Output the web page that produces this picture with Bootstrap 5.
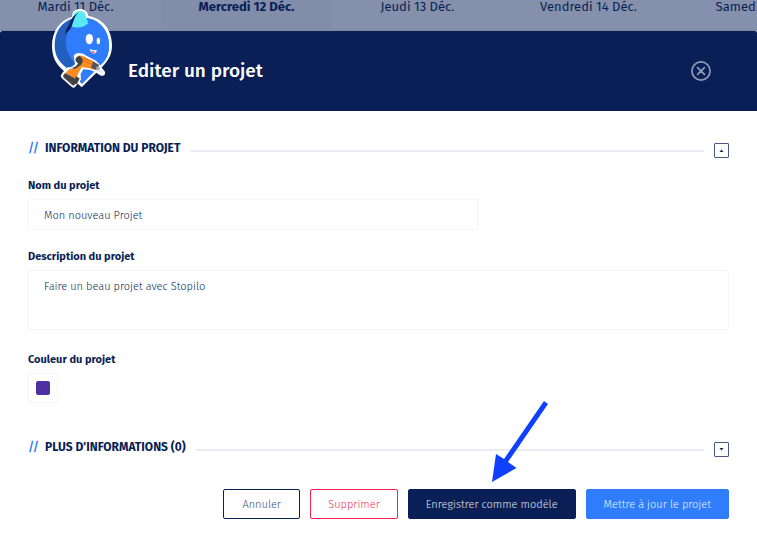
<!DOCTYPE html>
<html lang="fr">
<head>
<meta charset="utf-8">
<meta name="viewport" content="width=device-width, initial-scale=1">
<title>Editer un projet</title>
<link rel="stylesheet" href="https://cdn.jsdelivr.net/npm/bootstrap@5.3.0/dist/css/bootstrap.min.css">
<style>
:root { --navy: #0a1f56; --azure: #2f7dfc; --rose: #f5214f; }
body { font-family: "Fira Sans", "Noto Sans", "Open Sans", sans-serif; font-size: 11px; line-height: 16px; color: var(--navy); background: #fff; }
.days { height: 31px; background: #8591ac; margin: 0; overflow: hidden; font-size: 13px; border-bottom: 2px solid #808ba4; }
.days-track { margin-left: -10px; }
.day { flex: 0 0 171px; text-align: center; line-height: 13px; }
.day-active { background: #828daa; font-weight: 700; }
.dialog-head { background: var(--navy); height: 80px; padding: 0 46px 0 128px; border-radius: 2px 2px 0 0; }
.dialog-title { font-size: 19px; line-height: 24px; font-weight: 500; color: #fff; }
.mascot { left: 50px; bottom: 22px; width: 64px; height: 82px; }
.dismiss { width: 20px; height: 20px; line-height: 0; }
.dialog-body { padding: 29px 28px; }
.section-row { gap: 10px; }
.section-first { margin-bottom: 20px; }
.section-more { margin-bottom: 32px; }
.section-title { font-size: 12px; line-height: 16px; font-weight: 700; margin: 0 0 2px; }
.slashes { color: var(--azure); font-weight: 500; width: 17px; }
.rule { height: 2px; margin-bottom: 6px; background: #e8edf5; }
.toggle { width: 15px; height: 15px; border: 1px solid #47578a; border-radius: 1px; background: #fff; }
.group-name { margin-bottom: 19px; }
.group-text { margin-bottom: 22px; }
.group-color { margin-bottom: 36px; }
.field-name { font-weight: 700; margin-bottom: 5px; }
.field { border: 1px solid #f4f5f9; border-radius: 2px; padding: 8px 15px 6px; font-size: 11px; font-weight: 300; line-height: 16px; color: var(--navy); }
.field-short { max-width: 450px; height: 31px; }
.field-long { height: 60px; resize: none; }
.swatch { width: 30px; height: 30px; border: 1px solid #f4f5f9; border-radius: 2px; padding: 7px; background: #fff; }
.swatch::-webkit-color-swatch-wrapper { padding: 0; }
.swatch::-webkit-color-swatch { border: 0; border-radius: 2px; }
.actions { gap: 10px; }
.action { --bs-btn-font-size: 11px; --bs-btn-line-height: 16px; --bs-btn-padding-x: 17px; --bs-btn-border-radius: 2px; padding-top: 7px; padding-bottom: 5px; min-width: 77px; font-weight: 300; }
.action-cancel { color: #3d4d7a; border-color: var(--navy); }
.action-delete { color: #f5305a; border-color: var(--rose); }
.action-model { color: #e2e6ef; background: var(--navy); border-color: var(--navy); }
.action-save { color: #eaf2ff; background: var(--azure); border-color: var(--azure); }
.pointer { left: 50%; bottom: 100%; width: 57px; height: 81px; margin-bottom: 8px; pointer-events: none; }
</style>
</head>
<body>
<div class="days" aria-hidden="true">
  <div class="days-track d-flex h-100">
    <div class="day">Mardi 11 Déc.</div>
    <div class="day day-active">Mercredi 12 Déc.</div>
    <div class="day">Jeudi 13 Déc.</div>
    <div class="day">Vendredi 14 Déc.</div>
    <div class="day">Samedi 15 Déc.</div>
  </div>
</div>
<main>
  <header class="dialog-head position-relative d-flex align-items-center justify-content-between">
    <svg class="mascot position-absolute" viewBox="30 21 192 246" aria-hidden="true">
      <path d="M97 50C92 22 142 18 145 48C191 56 216 91 216 136C216 166 204 184 184 203L125 262L62 204C43 185 36 164 36 136C36 95 59 60 97 50Z" fill="#fff"/>
      <path d="M104 54C64 64 44 95 44 136C44 165 55 183 74 199L126 251L182 195C199 179 207 162 207 137C207 91 178 59 138 54Z" fill="#225fbf"/>
      <path d="M116 60C88 75 78 98 78 129C78 157 91 172 105 190L126 251L182 195C199 179 207 162 207 137C207 91 178 59 138 54Z" fill="#2f7dfc"/>
      <path d="M102 42C109 30 131 29 136 44L145 70C131 84 108 86 93 78Z" fill="#59e9f4"/>
      <path d="M117 38C99 48 101 74 89 89L76 102L79 88C92 72 90 48 117 38Z" fill="#08205b"/>
      <ellipse cx="148" cy="117" rx="11" ry="16" fill="#fff"/>
      <ellipse cx="175" cy="123" rx="5" ry="10" fill="#fff"/>
      <path d="M149 146Q159 152 171 150Q169 161 160 161Q152 158 149 146Z" fill="#fff"/>
      <path d="M153 154Q160 151 165 158Q159 164 153 154Z" fill="#f6536d"/>
      <path d="M101 169C105 155 126 158 134 164L159 178Q175 185 184 202L195 215Q197 229 183 227L165 216L151 210L130 208L122 222L123 239L105 261Q100 266 92 258L65 234Q60 227 66 220L82 202Q96 203 105 192Z" fill="#fff"/>
      <path d="M108 174Q115 164 128 168L160 184L174 195L166 210L145 204L125 201L114 221L108 239L77 219L88 207L105 207L116 190Z" fill="#ff8b23"/>
      <path d="M107 174L119 167L128 177Q130 192 117 199L105 207L92 204Q110 202 114 190L107 184Z" fill="#434348"/>
      <path d="M76 219L111 239L103 256Q98 258 94 253L70 232Q67 227 76 219Z" fill="#434348"/>
      <path d="M107 229L119 235L111 252L103 253Z" fill="#434348"/>
      <path d="M159 184L178 195L169 210L153 204Z" fill="#58565a"/>
      <path d="M171 199L181 204L177 214L167 209Z" fill="#a3a6b0"/>
      <path d="M178 206L190 218L187 222L173 212Z" fill="#e5e7ed"/>
      <path d="M133 174L154 184M129 181L151 192" stroke="#d97212" stroke-width="3"/>
    </svg>
    <h1 class="dialog-title m-0">Editer un projet</h1>
    <button type="button" class="dismiss btn p-0 border-0" aria-label="Fermer">
      <svg width="20" height="20" viewBox="0 0 20 20" fill="none" stroke="#8f9ab8" stroke-width="1.7" stroke-linecap="round"><circle cx="10" cy="10" r="9.1"/><path d="M6.6 6.6L13.4 13.4M13.4 6.6L6.6 13.4"/></svg>
    </button>
  </header>
  <form class="dialog-body">
    <div class="section-row section-first d-flex align-items-end">
      <h2 class="section-title d-flex"><span class="slashes" aria-hidden="true">//</span>INFORMATION DU PROJET</h2>
      <div class="rule flex-grow-1"></div>
      <button type="button" class="toggle p-0 d-flex align-items-center justify-content-center" aria-label="Réduire"><svg width="5" height="3" viewBox="0 0 5 3"><path d="M0.500 3L2.500 0.500L4.500 3Z" fill="#0a1f56"/></svg></button>
    </div>
    <div class="group-name">
      <label class="field-name d-block" for="project-name">Nom du projet</label>
      <input class="field field-short d-block w-100" id="project-name" type="text" value="Mon nouveau Projet">
    </div>
    <div class="group-text">
      <label class="field-name d-block" for="project-text">Description du projet</label>
      <textarea class="field field-long d-block w-100" id="project-text">Faire un beau projet avec Stopilo</textarea>
    </div>
    <div class="group-color">
      <label class="field-name d-block" for="project-color">Couleur du projet</label>
      <input class="swatch d-block" id="project-color" type="color" value="#5030a0">
    </div>
    <div class="section-row section-more d-flex align-items-end">
      <h2 class="section-title d-flex"><span class="slashes" aria-hidden="true">//</span>PLUS D'INFORMATIONS (0)</h2>
      <div class="rule flex-grow-1"></div>
      <button type="button" class="toggle p-0 d-flex align-items-center justify-content-center" aria-label="Développer"><svg width="5" height="3" viewBox="0 0 5 3"><path d="M0.500 0L4.500 0L2.500 2.500Z" fill="#0a1f56"/></svg></button>
    </div>
    <div class="actions d-flex flex-wrap justify-content-end">
      <button type="button" class="btn action action-cancel">Annuler</button>
      <button type="button" class="btn action action-delete">Supprimer</button>
      <button type="button" class="btn action action-model position-relative">Enregistrer comme modèle
        <svg class="pointer position-absolute" viewBox="0 0 57 81" aria-hidden="true"><path d="M0 81L4 53L12 58L52 0L56 3L16 61L24.500 67Z" fill="#1040ff"/></svg>
      </button>
      <button type="submit" class="btn action action-save">Mettre à jour le projet</button>
    </div>
  </form>
</main>
<script src="https://cdn.jsdelivr.net/npm/bootstrap@5.3.0/dist/js/bootstrap.bundle.min.js"></script>
</body>
</html>
